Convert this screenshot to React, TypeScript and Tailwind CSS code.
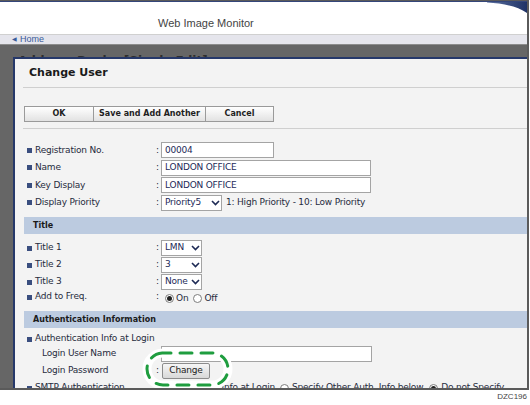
import type { ReactNode } from "react";

function Bullet() {
  return <span className="ml-[3px] mr-[3px] h-[5px] w-[5px] shrink-0 bg-[#3a4e7f]" />;
}

function Chevron() {
  return (
    <svg width="9" height="6" viewBox="0 0 9 6" className="shrink-0">
      <path d="M1 1l3.5 3.5L8 1" fill="none" stroke="#1d2a55" strokeWidth="1.6" />
    </svg>
  );
}

function Field({
  label,
  indent = false,
  colon = true,
  height = "h-[17.5px]",
  children,
}: {
  label: string;
  indent?: boolean;
  colon?: boolean;
  height?: string;
  children?: ReactNode;
}) {
  return (
    <div className={`flex items-center ${height}`}>
      <div className="flex w-[132px] shrink-0 items-center">
        {indent ? <span className="w-[18px] shrink-0" /> : <Bullet />}
        <span className="whitespace-nowrap">{label}</span>
      </div>
      {colon && <span className="w-[5px] shrink-0">:</span>}
      {children}
    </div>
  );
}

function TextBox({ value, width }: { value: string; width: string }) {
  return (
    <div className={`flex h-[16px] ${width} items-center border border-[#a4a4a4] bg-white pl-[3px] text-[#1d2a58]`}>
      {value}
    </div>
  );
}

function Select({ value, width }: { value: string; width: string }) {
  return (
    <div className={`flex h-[16px] ${width} items-center justify-between border border-[#a4a4a4] bg-white pl-[3px] pr-[1px] text-[#1d2a58]`}>
      <span>{value}</span>
      <Chevron />
    </div>
  );
}

function Radio({ checked = false }: { checked?: boolean }) {
  return (
    <span className="flex h-[9px] w-[9px] shrink-0 items-center justify-center rounded-full border border-[#7d7d7d] bg-white">
      {checked && <span className="h-[5px] w-[5px] rounded-full bg-[#222]" />}
    </span>
  );
}

function Section({ title }: { title: string }) {
  return (
    <div className="flex h-[17px] items-center bg-[#bccbe0] pl-[9px] text-[8px] font-bold tracking-normal text-[#1a1a1a]">
      {title}
    </div>
  );
}

export default function App() {
  return (
    <div className="h-[405px] w-[530px] bg-white font-['DejaVu_Sans',sans-serif]">
      <div className="relative flex h-[390px] w-[529px] flex-col overflow-hidden border-t border-r-2 border-b-2 border-[#5a5a5a] bg-[#666]">
        <div className="h-px bg-[#34467a]" />
        <header className="relative h-[33px] border-b border-[#d0d0d0] bg-white pl-[158px] pt-[15px] font-['Liberation_Sans',sans-serif] text-[11px] leading-[13px] text-[#444]">
          Web Image Monitor
          <svg width="40" height="12" viewBox="0 0 40 12" className="absolute right-0 top-0">
            <defs>
              <linearGradient id="sw" x1="0" x2="1" y1="0" y2="0">
                <stop offset="0" stopColor="#5b6f9f" />
                <stop offset="1" stopColor="#1f3366" />
              </linearGradient>
            </defs>
            <path d="M0 0H40V11C30 4 16 1.5 0 .6Z" fill="url(#sw)" />
          </svg>
        </header>
        <div className="flex h-[10px] items-center border-b border-[#8c8c8c] bg-[#e5e5ec] pl-[12px] font-['Liberation_Sans',sans-serif] text-[9px] text-[#3a5a9a]">
          <span className="mr-[3px] text-[6px]">◀</span>
          Home
        </div>
        <div className="flex-1 pl-[18px] pt-[9px] text-[12px] font-bold leading-[14px] text-[#2e2e2e]">
          Address Book : [Single Edit]
        </div>

        <div className="absolute left-[13px] top-[56px] h-[340px] w-[540px] border-l-2 border-t-2 border-[#26386a] bg-[#f3f3f3] text-[9px] tracking-[-0.2px] text-[#262b3d]">
          <div className="flex h-[28px] items-center pl-[14px] text-[11px] font-bold tracking-normal text-[#1a1a1a]">
            Change User
          </div>
          <div className="ml-[8px] h-px bg-[#cfcfcf]" />
          <div className="ml-[9px] mt-[18px] flex h-[16px] w-fit border border-[#9a9a9a] text-[8px] font-bold tracking-normal text-[#1f1f1f]">
            <div className="flex w-[68px] items-center justify-center bg-linear-to-b from-white to-[#e2e2e2]">OK</div>
            <div className="flex w-[112px] items-center justify-center border-l border-[#9a9a9a] bg-linear-to-b from-white to-[#e2e2e2]">
              Save and Add Another
            </div>
            <div className="flex w-[68px] items-center justify-center border-l border-[#9a9a9a] bg-linear-to-b from-white to-[#e2e2e2]">
              Cancel
            </div>
          </div>
          <div className="ml-[8px] mt-[6px] h-px bg-[#cfcfcf]" />

          <div className="ml-[9px] mt-[12.5px]">
            <Field label="Registration No.">
              <TextBox value="00004" width="w-[113px]" />
            </Field>
            <Field label="Name">
              <TextBox value="LONDON OFFICE" width="w-[210px]" />
            </Field>
            <Field label="Key Display">
              <TextBox value="LONDON OFFICE" width="w-[210px]" />
            </Field>
            <Field label="Display Priority">
              <Select value="Priority5" width="w-[61px]" />
              <span className="ml-[4px] whitespace-nowrap">1: High Priority - 10: Low Priority</span>
            </Field>

            <div className="mt-[5.5px]">
              <Section title="Title" />
            </div>
            <div className="mt-[5.5px]">
              <Field label="Title 1" height="h-[17px]">
                <Select value="LMN" width="w-[41px]" />
              </Field>
              <Field label="Title 2" height="h-[17px]">
                <Select value="3" width="w-[41px]" />
              </Field>
              <Field label="Title 3" height="h-[17px]">
                <Select value="None" width="w-[41px]" />
              </Field>
              <Field label="Add to Freq." height="h-[13px]">
                <div className="ml-[4px] mt-[3px] flex items-center">
                  <Radio checked />
                  <span className="ml-[2px]">On</span>
                  <span className="ml-[5px]">
                    <Radio />
                  </span>
                  <span className="ml-[2px]">Off</span>
                </div>
              </Field>
            </div>

            <div className="mt-[7.5px]">
              <Section title="Authentication Information" />
            </div>
            <div className="mt-[4.5px]">
              <Field label="Authentication Info at Login" colon={false} height="h-[13px]" />
              <Field label="Login User Name" indent height="h-[17px]">
                <TextBox value="" width="w-[211px]" />
              </Field>
              <Field label="Login Password" indent height="h-[17px]">
                <div className="ml-[1px] flex h-[16px] w-[48px] items-center justify-center rounded-[2px] border border-[#8c8c8c] bg-linear-to-b from-[#f6f6f6] to-[#d8d8d8] text-[#222]">
                  Change
                </div>
              </Field>
              <Field label="SMTP Authentication" height="h-[17px]">
                <div className="ml-[4px] flex items-center whitespace-nowrap">
                  <Radio />
                  <span className="ml-[3px]">Use Auth. Info at Login</span>
                  <span className="ml-[5px]">
                    <Radio />
                  </span>
                  <span className="ml-[3px]">Specify Other Auth. Info below</span>
                  <span className="ml-[6px]">
                    <Radio checked />
                  </span>
                  <span className="ml-[3px]">Do not Specify</span>
                </div>
              </Field>
            </div>
          </div>
        </div>

        <svg width="96" height="46" viewBox="0 0 96 46" className="absolute left-[140px] top-[345px]">
          <rect x="7" y="7" width="81" height="32" rx="16" fill="none" stroke="#ffffff" strokeWidth="9" />
          <rect
            x="7"
            y="7"
            width="81"
            height="32"
            rx="16"
            fill="none"
            stroke="#1f9d3f"
            strokeWidth="3"
            strokeDasharray="12 9"
            strokeDashoffset="4"
            strokeLinecap="round"
          />
        </svg>
      </div>
      <div className="mt-[2px] flex justify-end pr-[3px] font-['Liberation_Sans',sans-serif] text-[8px] leading-[10px] text-[#444]">
        DZC196
      </div>
    </div>
  );
}
